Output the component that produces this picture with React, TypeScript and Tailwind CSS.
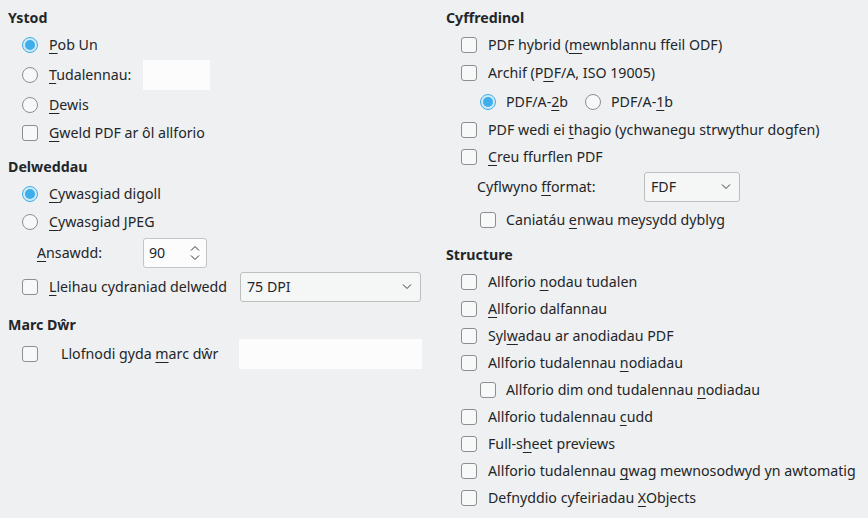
import React from "react";

const font = { fontFamily: '"Noto Sans", "DejaVu Sans", sans-serif' };

const M = ({ t, i }: { t: string; i: number }) => (
  <span className="whitespace-nowrap">
    {t.slice(0, i)}
    <span className="underline underline-offset-[3px] decoration-[1px]">{t[i]}</span>
    {t.slice(i + 1)}
  </span>
);

const Radio = ({ on }: { on?: boolean }) =>
  on ? (
    <span className="w-4 h-4 shrink-0 rounded-full border border-[#3daee9] bg-[#cfe9f8] flex items-center justify-center">
      <span className="w-[10px] h-[10px] rounded-full bg-[#3daee9]" />
    </span>
  ) : (
    <span className="w-4 h-4 shrink-0 rounded-full border border-[#8c8f92] bg-[#f7f8f8]" />
  );

const Check = () => (
  <span className="w-4 h-4 shrink-0 rounded-[3px] border border-[#8c8f92] bg-[#f7f8f8]" />
);

const Chevron = ({ up }: { up?: boolean }) => (
  <svg width="10" height="6" viewBox="0 0 10 6" className="block">
    <path
      d={up ? "M1 5.5 L5 1.5 L9 5.5" : "M1 0.5 L5 4.5 L9 0.5"}
      fill="none"
      stroke="#31363b"
      strokeWidth="1"
    />
  </svg>
);

const Combo = ({ value, w }: { value: string; w: string }) => (
  <div
    className={`${w} h-[30px] shrink-0 rounded-[3px] border border-[#bcbec0] bg-[#f5f6f6] flex items-center justify-between pl-[6px] pr-[8px]`}
  >
    <span>{value}</span>
    <Chevron />
  </div>
);

const Heading = ({ text, h, pt }: { text: string; h: string; pt?: string }) => (
  <div className={`${h} ${pt ?? ""} flex items-center font-bold`}>{text}</div>
);

export default function App() {
  return (
    <div
      className="w-[868px] h-[518px] bg-[#eff0f1] text-[#232629] text-[14.2px] flex overflow-hidden"
      style={font}
    >
      {/* left column */}
      <div className="w-[438px] pl-[8px] pt-[4px] flex flex-col">
        <Heading text="Ystod" h="h-[27px]" />
        <div className="h-[28px] flex items-center pl-[14px] gap-[11px]">
          <Radio on />
          <M t="Pob Un" i={0} />
        </div>
        <div className="h-[32px] flex items-center pl-[14px] gap-[11px]">
          <Radio />
          <span className="w-[83px]">
            <M t="Tudalennau:" i={0} />
          </span>
          <div className="w-[67px] h-[30px] bg-[#fcfcfc]" />
        </div>
        <div className="h-[28px] flex items-center pl-[14px] gap-[11px]">
          <Radio />
          <M t="Dewis" i={0} />
        </div>
        <div className="h-[27px] flex items-center pl-[14px] gap-[11px]">
          <Check />
          <M t="Gweld PDF ar ôl allforio" i={0} />
        </div>

        <Heading text="Delweddau" h="h-[34px]" pt="pt-[8px]" />
        <div className="h-[27px] flex items-center pl-[14px] gap-[11px]">
          <Radio on />
          <M t="Cywasgiad digoll" i={0} />
        </div>
        <div className="h-[29px] flex items-center pl-[14px] gap-[11px]">
          <Radio />
          <M t="Cywasgiad JPEG" i={0} />
        </div>
        <div className="h-[33px] flex items-center pl-[29px]">
          <span className="w-[106px]">
            <M t="Ansawdd:" i={0} />
          </span>
          <div className="w-[64px] h-[30px] rounded-[3px] border border-[#c2c4c6] bg-[#fcfcfc] flex items-center justify-between pl-[5px] pr-[6px]">
            <span>90</span>
            <span className="flex flex-col gap-[4px]">
              <Chevron up />
              <Chevron />
            </span>
          </div>
        </div>
        <div className="h-[36px] flex items-center pl-[14px] gap-[11px]">
          <Check />
          <span className="w-[191px]">
            <M t="Lleihau cydraniad delwedd" i={0} />
          </span>
          <Combo value="75 DPI" w="w-[181px] -ml-[11px]" />
        </div>

        <Heading text="Marc Dŵr" h="h-[34px]" pt="pt-[6px]" />
        <div className="h-[30px] flex items-center pl-[14px]">
          <Check />
          <span className="ml-[23px] w-[178px]">
            <M t="Llofnodi gyda marc dŵr" i={14} />
          </span>
          <div className="w-[183px] h-[30px] bg-[#fcfcfc]" />
        </div>
      </div>

      {/* right column */}
      <div className="flex-1 pl-[8px] pt-[4px] flex flex-col">
        <Heading text="Cyffredinol" h="h-[27px]" />
        <div className="h-[28px] flex items-center pl-[15px] gap-[11px]">
          <Check />
          <M t="PDF hybrid (mewnblannu ffeil ODF)" i={12} />
        </div>
        <div className="h-[28px] flex items-center pl-[15px] gap-[11px]">
          <Check />
          <M t="Archif (PDF/A, ISO 19005)" i={9} />
        </div>
        <div className="h-[29px] flex items-center pl-[34px] pt-[1px]">
          <Radio on />
          <span className="ml-[10px] w-[79px]">
            <M t="PDF/A-2b" i={6} />
          </span>
          <Radio />
          <span className="ml-[10px]">
            <M t="PDF/A-1b" i={6} />
          </span>
        </div>
        <div className="h-[27px] flex items-center pl-[15px] gap-[11px]">
          <Check />
          <M t="PDF wedi ei thagio (ychwanegu strwythur dogfen)" i={12} />
        </div>
        <div className="h-[28px] flex items-center pl-[15px] gap-[11px]">
          <Check />
          <M t="Creu ffurflen PDF" i={0} />
        </div>
        <div className="h-[32px] flex items-center pl-[31px]">
          <span className="w-[167px]">
            <M t="Cyflwyno fformat:" i={9} />
          </span>
          <Combo value="FDF" w="w-[96px]" />
        </div>
        <div className="h-[34px] flex items-center pl-[34px] gap-[10px]">
          <Check />
          <M t="Caniatáu enwau meysydd dyblyg" i={9} />
        </div>

        <Heading text="Structure" h="h-[31px]" pt="pt-[5px]" />
        <div className="h-[27px] flex items-center pl-[15px] gap-[11px]">
          <Check />
          <M t="Allforio nodau tudalen" i={9} />
        </div>
        <div className="h-[27px] flex items-center pl-[15px] gap-[11px]">
          <Check />
          <M t="Allforio dalfannau" i={0} />
        </div>
        <div className="h-[27px] flex items-center pl-[15px] gap-[11px]">
          <Check />
          <M t="Sylwadau ar anodiadau PDF" i={3} />
        </div>
        <div className="h-[27px] flex items-center pl-[15px] gap-[11px]">
          <Check />
          <M t="Allforio tudalennau nodiadau" i={20} />
        </div>
        <div className="h-[27px] flex items-center pl-[34px] gap-[10px]">
          <Check />
          <M t="Allforio dim ond tudalennau nodiadau" i={28} />
        </div>
        <div className="h-[27px] flex items-center pl-[15px] gap-[11px]">
          <Check />
          <M t="Allforio tudalennau cudd" i={20} />
        </div>
        <div className="h-[27px] flex items-center pl-[15px] gap-[11px]">
          <Check />
          <M t="Full-sheet previews" i={6} />
        </div>
        <div className="h-[27px] flex items-center pl-[15px] gap-[11px]">
          <Check />
          <M t="Allforio tudalennau gwag mewnosodwyd yn awtomatig" i={20} />
        </div>
        <div className="h-[27px] flex items-center pl-[15px] gap-[11px]">
          <Check />
          <M t="Defnyddio cyfeiriadau XObjects" i={22} />
        </div>
      </div>
    </div>
  );
}
